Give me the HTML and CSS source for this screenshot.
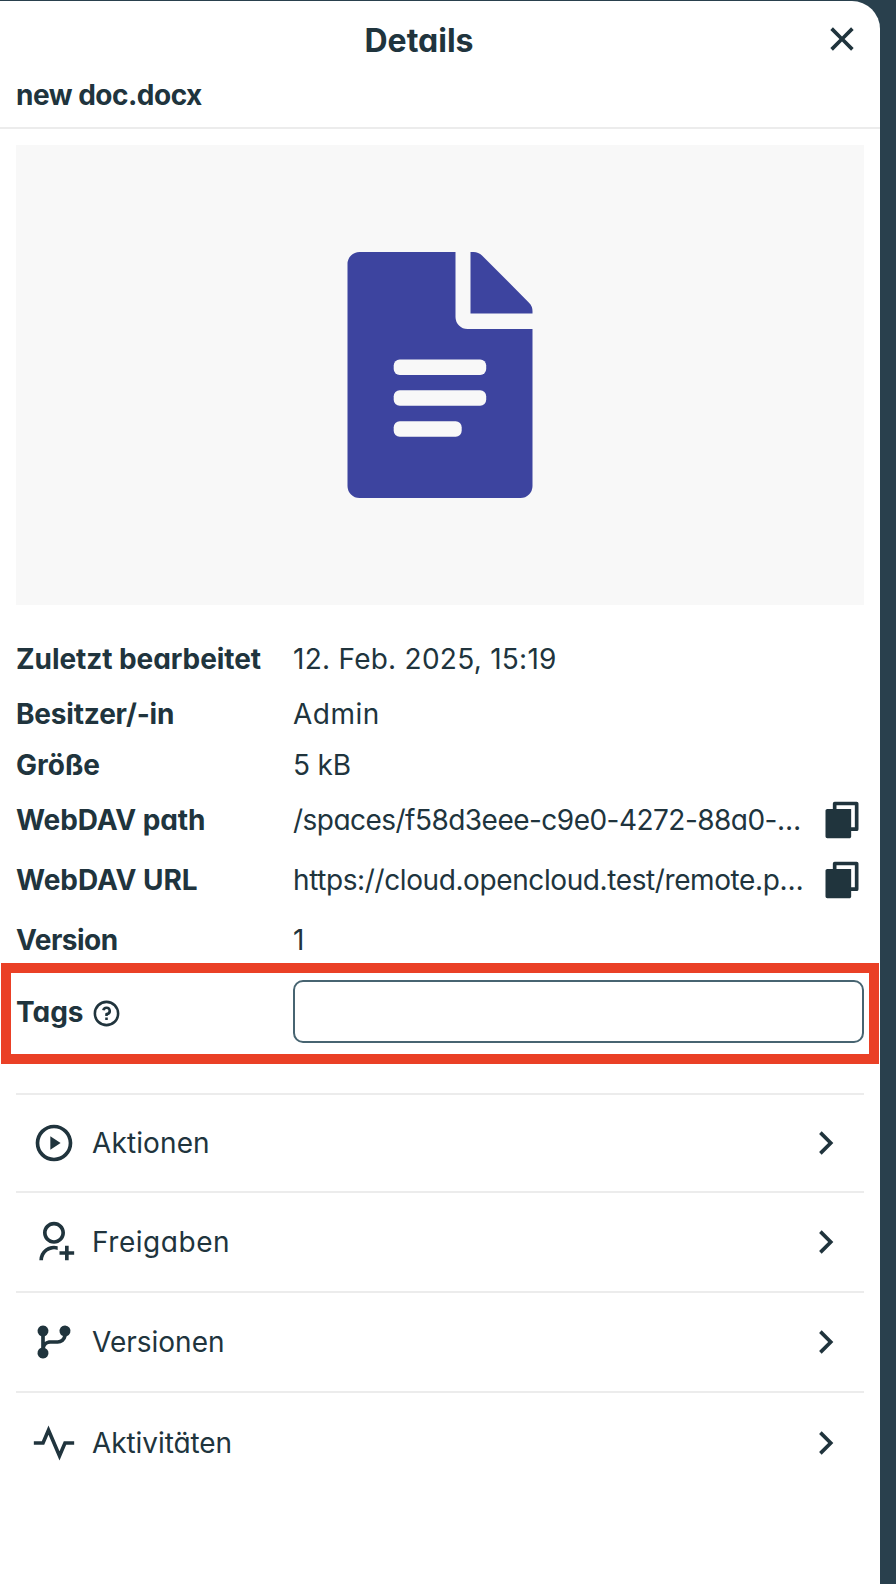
FILE: index.html
```html
<!DOCTYPE html>
<html lang="de">
<head>
<meta charset="utf-8">
<title>Details</title>
<link rel="stylesheet" href="styles.css">
</head>
<body>
<aside class="sidebar">
  <header class="header">
    <div class="title-row">
      <h1 class="title">Details</h1>
      <button class="icon-button" aria-label="Schließen">
        <svg class="icon" viewBox="0 0 24 24"><path d="M12 10.586l4.950-4.950 1.414 1.414-4.950 4.950 4.950 4.950-1.414 1.414-4.950-4.950-4.950 4.950-1.414-1.414 4.950-4.950-4.950-4.950L7.050 5.636z"/></svg>
      </button>
    </div>
    <h2 class="filename">new doc.docx</h2>
  </header>

  <div class="preview">
    <svg class="file-icon" viewBox="0 0 186 246">
      <path d="M12.500 0H108.500V65a12 12 0 0 0 12 12H185.500V234a12 12 0 0 1-12 12H12.500a12 12 0 0 1-12-12V12a12 12 0 0 1 12-12z"/>
      <path d="M123.500 0h3a12 12 0 0 1 8.500 3.500l47 47.200a12 12 0 0 1 3.500 8.500v2.300h-62z"/>
      <g class="file-lines">
        <rect x="46.700" y="107.500" width="92.500" height="15.500" rx="6"/>
        <rect x="46.700" y="138.300" width="92.500" height="15.500" rx="6"/>
        <rect x="46.700" y="169.300" width="68" height="15.500" rx="6"/>
      </g>
    </svg>
  </div>

  <dl class="details">
    <div class="row row-modified"><dt class="modified">Zuletzt bearbeitet</dt><dd class="date">12. Feb. 2025, 15:19</dd></div>
    <div class="row row-owner"><dt class="owner">Besitzer/-in</dt><dd class="name">Admin</dd></div>
    <div class="row row-size"><dt>Größe</dt><dd class="size">5 kB</dd></div>
    <div class="row row-path"><dt class="path-label">WebDAV path</dt><dd class="path">/spaces/f58d3eee-c9e0-4272-88a0-…</dd>
      <svg class="icon copy" viewBox="0 0 24 24"><path d="M7 6V3a1 1 0 0 1 1-1h12a1 1 0 0 1 1 1v14a1 1 0 0 1-1 1h-3v3c0 .552-.45 1-1.007 1H4.007A1.001 1.001 0 0 1 3 21l.003-14c0-.552.45-1 1.007-1H7zm2 0h8v10h2V4H9v2z"/></svg>
    </div>
    <div class="row row-url"><dt class="url-label">WebDAV URL</dt><dd class="url">https://cloud.opencloud.test/remote.p…</dd>
      <svg class="icon copy" viewBox="0 0 24 24"><path d="M7 6V3a1 1 0 0 1 1-1h12a1 1 0 0 1 1 1v14a1 1 0 0 1-1 1h-3v3c0 .552-.45 1-1.007 1H4.007A1.001 1.001 0 0 1 3 21l.003-14c0-.552.45-1 1.007-1H7zm2 0h8v10h2V4H9v2z"/></svg>
    </div>
    <div class="row row-version"><dt class="version">Version</dt><dd>1</dd></div>
    <div class="row row-tags"><dt class="tags"><span>Tags</span>
      <svg class="help" viewBox="0 0 24 24"><path d="M12 22C6.477 22 2 17.523 2 12S6.477 2 12 2s10 4.477 10 10-4.477 10-10 10zm0-2a8 8 0 1 0 0-16 8 8 0 0 0 0 16zm-1-5h2v2h-2v-2zm2-1.645V14h-2v-1.500a1 1 0 0 1 1-1 1.500 1.500 0 1 0-1.471-1.794l-1.962-.393A3.501 3.501 0 1 1 13 13.355z"/></svg></dt>
      <dd class="tags-field"><input class="tags-input" type="text" aria-label="Tags"></dd>
    </div>
  </dl>

  <nav class="panels">
    <a class="panel panel-first">
      <svg class="icon" viewBox="0 0 24 24"><path d="M12 22C6.477 22 2 17.523 2 12S6.477 2 12 2s10 4.477 10 10-4.477 10-10 10zm0-2a8 8 0 1 0 0-16 8 8 0 0 0 0 16zM10 8.300L15.600 12 10 15.700z"/></svg>
      <span class="panel-name actions">Aktionen</span>
      <svg class="icon" viewBox="0 0 24 24"><path d="M13.172 12l-4.950-4.950 1.414-1.414L16 12l-6.364 6.364-1.414-1.414z"/></svg>
    </a>
    <a class="panel">
      <svg class="icon" viewBox="0 0 24 24"><path d="M14 14.252v2.090A6 6 0 0 0 6 22l-2-.001a8 8 0 0 1 10-7.748zM12 13c-3.315 0-6-2.685-6-6s2.685-6 6-6 6 2.685 6 6-2.685 6-6 6zm0-2c2.210 0 4-1.790 4-4s-1.790-4-4-4-4 1.790-4 4 1.790 4 4 4zm6 6v-3h2v3h3v2h-3v3h-2v-3h-3v-2h3z"/></svg>
      <span class="panel-name shares">Freigaben</span>
      <svg class="icon" viewBox="0 0 24 24"><path d="M13.172 12l-4.950-4.950 1.414-1.414L16 12l-6.364 6.364-1.414-1.414z"/></svg>
    </a>
    <a class="panel">
      <svg class="icon" viewBox="0 0 24 24"><path d="M7.105 15.210A3.001 3.001 0 1 1 5 15.170V8.830a3.001 3.001 0 1 1 2 0V12c.836-.628 1.874-1 3-1h4a3.001 3.001 0 0 0 2.895-2.210 3.001 3.001 0 1 1 2.032.064A5.001 5.001 0 0 1 14 13h-4a3.001 3.001 0 0 0-2.895 2.210z"/></svg>
      <span class="panel-name">Versionen</span>
      <svg class="icon" viewBox="0 0 24 24"><path d="M13.172 12l-4.950-4.950 1.414-1.414L16 12l-6.364 6.364-1.414-1.414z"/></svg>
    </a>
    <a class="panel panel-last">
      <svg class="icon" viewBox="0 0 24 24"><path d="M9 7.539l6 14L18.660 13H23v-2h-5.660L15 16.461l-6-14L5.340 11H1v2h5.660z"/></svg>
      <span class="panel-name activities">Aktivitäten</span>
      <svg class="icon" viewBox="0 0 24 24"><path d="M13.172 12l-4.950-4.950 1.414-1.414L16 12l-6.364 6.364-1.414-1.414z"/></svg>
    </a>
  </nav>
</aside>
</body>
</html>
```
FILE: styles.css
```css
* { box-sizing: border-box; }

body {
  margin: 0;
  height: 1584px;
  padding-top: 1px;
  background: #29404d;
  color: #20343d;
  font: 400 28px/34px Inter, "Noto Sans", sans-serif;
  font-feature-settings: "cv11";
  overflow: hidden;
}

.sidebar {
  width: 880px;
  height: 1583px;
  background: #fff;
  border-top-right-radius: 28px;
}

.icon {
  display: block;
  flex: none;
  width: 44px;
  height: 44px;
  fill: currentColor;
}

/* Header */
.header {
  height: 128px;
  border-bottom: 2px solid #ececec;
}

.title-row {
  display: grid;
  grid-template-columns: 1fr 44px;
  align-items: center;
  height: 76px;
  padding: 0 16px 0 18px;
}

.title {
  margin: 3px 0 0;
  font-size: 32px;
  line-height: 40px;
  letter-spacing: 0;
  text-align: center;
}

.icon-button {
  padding: 0;
  border: 0;
  background: none;
  color: inherit;
}

.filename {
  margin: 1px 0 0;
  padding-left: 16px;
  font-size: 28px;
  line-height: 34px;
  letter-spacing: -0.5px;
}

/* File preview */
.preview {
  display: flex;
  justify-content: center;
  align-items: flex-start;
  height: 460px;
  margin: 16px 16px 28px;
  padding-top: 107px;
  background: #f8f8f8;
}

.file-icon {
  width: 186px;
  height: 246px;
  fill: #3d449f;
}

.file-lines { fill: #f8f8f8; }

/* Details table */
.details {
  margin: 0 16px;
}

.row {
  display: grid;
  grid-template-columns: 277px 1fr 44px;
  align-items: center;
}

.row dt { font-weight: 700; white-space: nowrap; }
.row dd { margin: 0; white-space: nowrap; }

.row-modified { height: 52px; }
.row-owner { height: 58px; }
.row-size { height: 44px; }
.row-path { height: 66px; }
.row-url { height: 54px; }
.row-version { height: 66px; }

.row dt.modified { letter-spacing: -0.06px; }
.row dt.owner { letter-spacing: -0.18px; }
.row dt.path-label { letter-spacing: -0.08px; }
.row dt.url-label { letter-spacing: -0.03px; }
.row dt.version { letter-spacing: -0.5px; }
.date { letter-spacing: 0.26px; }
.name { letter-spacing: 0.5px; }
.size { letter-spacing: -0.2px; }
.path { letter-spacing: -0.53px; }
.url { letter-spacing: -0.4px; }

.row-tags {
  position: relative;
  height: 77px;
}

/* Highlight frame around the tags row */
.row-tags::after {
  content: "";
  position: absolute;
  inset: -10px -15px -14px;
  border: 10px solid #ea4026;
  pointer-events: none;
}

.tags {
  display: flex;
  align-items: center;
  gap: 7px;
}

.help {
  width: 31px;
  height: 31px;
  margin-top: 3px;
  fill: currentColor;
}

.tags-field { grid-column: 2 / 4; }

.tags-input {
  display: block;
  width: 100%;
  height: 63px;
  border: 2px solid #476471;
  border-radius: 10px;
  background: #fff;
}

/* Panel links */
.panels { margin: 43px 16px 0; }

.panel {
  display: flex;
  align-items: center;
  height: 100px;
  padding: 0 16px;
  border-top: 2px solid #ececec;
}

.panel-first { height: 98px; }
.panel-last { height: 102px; }

.panel-name {
  flex: 1;
  padding-left: 16px;
}

.actions { letter-spacing: 0.12px; }
.shares { letter-spacing: 0.55px; }
.activities { letter-spacing: -0.08px; }
```
